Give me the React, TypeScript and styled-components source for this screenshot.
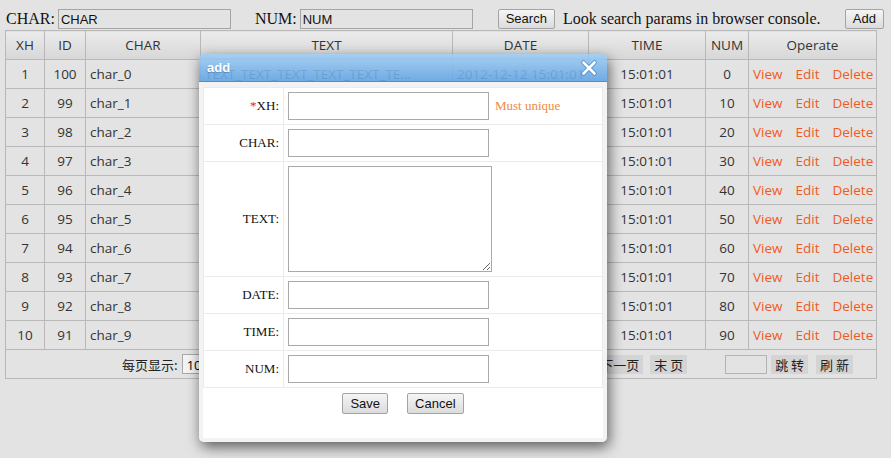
import React from "react";
import styled, { createGlobalStyle } from "styled-components";

const GlobalStyle = createGlobalStyle`
  html, body {
    margin: 0;
    padding: 0;
    background: #e3e3e3;
    font-family: "Liberation Serif", "Times New Roman", serif;
  }
`;

interface Row {
  xh: number;
  id: number;
  char: string;
  text: string;
  date: string;
  time: string;
  num: number;
}

const rows: Row[] = Array.from({ length: 10 }, (_, i) => ({
  xh: i + 1,
  id: 100 - i,
  char: `char_${i}`,
  text: "TEXT_TEXT_TEXT_TEXT_TEXT_TE...",
  date: "2012-12-12 15:01:01",
  time: "15:01:01",
  num: i * 10,
}));

const Page = styled.div`
  position: relative;
  width: 891px;
  height: 458px;
  padding: 0 7px 0 5px;
  box-sizing: border-box;
  overflow: hidden;
`;

// search bar
const SearchBar = styled.div`
  display: flex;
  align-items: center;
  height: 22px;
  padding-top: 8px;
`;

const BarLabel = styled.label<{ $gap?: number }>`
  font-family: "Liberation Serif", "Times New Roman", serif;
  font-size: 16px;
  color: #111;
  margin-left: ${(p) => p.$gap ?? 0}px;
  margin-right: 3px;
`;

const BarInput = styled.input`
  width: 173px;
  height: 20px;
  box-sizing: border-box;
  border: 1px solid #a5a5a5;
  background: transparent;
  padding: 0 2px;
  font-family: "Liberation Sans", Arial, sans-serif;
  font-size: 13px;
  color: #111;
  outline: none;
`;

const Button = styled.button<{ $gap?: number }>`
  height: 20px;
  box-sizing: border-box;
  padding: 0 7px;
  margin-left: ${(p) => p.$gap ?? 0}px;
  border: 1px solid #a3a3a3;
  border-radius: 2px;
  background: linear-gradient(#f5f5f5, #dcdcdc);
  font-family: "Liberation Sans", Arial, sans-serif;
  font-size: 13px;
  color: #111;
  line-height: 18px;
`;

const Hint = styled.span`
  margin-left: 8px;
  font-size: 16px;
  color: #111;
`;

const AddButton = styled(Button)`
  margin-left: auto;
`;

// grid
const Grid = styled.table`
  width: 871px;
  table-layout: fixed;
  border-collapse: collapse;
  font-family: "Open Sans", "Noto Sans", sans-serif;
  font-size: 13.5px;
  color: #333;
`;

const Th = styled.th`
  height: 28px;
  padding: 0;
  border: 1px solid #b8b8b8;
  background: linear-gradient(#ebebeb, #d7d7d7);
  font-weight: normal;
  text-align: center;
`;

const Td = styled.td<{ $align?: string }>`
  height: 28px;
  padding: 0 4px;
  border: 1px solid #b8b8b8;
  text-align: ${(p) => p.$align ?? "center"};
  white-space: nowrap;
  overflow: hidden;
`;

const Ops = styled.div`
  display: flex;
  gap: 13px;
`;

const Link = styled.a`
  color: #f05a24;
  text-decoration: none;
`;

const PagerCell = styled.td`
  height: 28px;
  padding: 0;
  border: 1px solid #b8b8b8;
`;

const Pager = styled.div`
  display: flex;
  align-items: center;
  padding: 0 23px 0 116px;
  font-family: "Noto Sans CJK SC", "Noto Sans", sans-serif;
  font-size: 13px;
  color: #222;
`;

const PagerGroup = styled.div<{ $right?: boolean }>`
  display: flex;
  align-items: center;
  margin-left: ${(p) => (p.$right ? "auto" : "0")};
`;

const PageSize = styled.select`
  height: 20px;
  margin-left: 4px;
  border: 1px solid #a9a9a9;
  background: #f4f4f4;
  font-family: "Open Sans", sans-serif;
  font-size: 13px;
`;

const PagerButton = styled.span<{ $gap?: number }>`
  height: 19px;
  line-height: 19px;
  padding: 0 4px;
  margin-left: ${(p) => p.$gap ?? 0}px;
  background: #d4d4d4;
  white-space: pre;
`;

const JumpInput = styled.input`
  width: 42px;
  height: 19px;
  box-sizing: border-box;
  margin-left: 38px;
  margin-right: 4px;
  border: 1px solid #b3b3b3;
  background: transparent;
`;

// dialog
const Dialog = styled.div`
  position: absolute;
  left: 199px;
  top: 54px;
  width: 408px;
  border-radius: 5px;
  box-shadow: 2px 5px 14px rgba(0, 0, 0, 0.6);
`;

const DialogHeader = styled.div`
  display: flex;
  align-items: center;
  justify-content: space-between;
  height: 27px;
  padding: 0 10px 0 8px;
  border-radius: 5px 5px 0 0;
  border-bottom: 1px solid rgba(66, 136, 210, 0.9);
  background: linear-gradient(
    rgba(160, 205, 243, 0.9),
    rgba(98, 164, 226, 0.9)
  );
`;

const DialogTitle = styled.span`
  font-family: "Liberation Sans", Arial, sans-serif;
  font-weight: bold;
  font-size: 13px;
  color: #fff;
  text-shadow: 0 1px 1px rgba(40, 90, 150, 0.5);
`;

const DialogBody = styled.div`
  padding: 5px 4px 4px;
  background: #f3f3f3;
  border-radius: 0 0 5px 5px;
`;

const Panel = styled.div`
  background: #fff;
  padding-bottom: 24px;
`;

const Form = styled.table`
  width: 100%;
  border-collapse: collapse;
  font-family: "Liberation Serif", "Times New Roman", serif;
  font-size: 13px;
  color: #111;
`;

const FormRow = styled.tr<{ $h?: number }>`
  height: ${(p) => p.$h ?? 37}px;
`;

const FormLabel = styled.td`
  width: 75px;
  padding: 0 4px 0 0;
  border: 1px solid #ebebeb;
  text-align: right;
`;

const FormField = styled.td`
  padding: 0 0 0 4px;
  border: 1px solid #ebebeb;
`;

const Required = styled.span`
  color: #e8202a;
`;

const FieldInput = styled.input`
  width: 201px;
  height: 28px;
  box-sizing: border-box;
  border: 1px solid #a9a9a9;
  vertical-align: middle;
  outline: none;
`;

const FieldArea = styled.textarea`
  display: block;
  width: 204px;
  height: 106px;
  box-sizing: border-box;
  border: 1px solid #a9a9a9;
  outline: none;
`;

const Note = styled.span`
  margin-left: 6px;
  color: #f08a3c;
  vertical-align: middle;
`;

const Actions = styled.div`
  display: flex;
  justify-content: center;
  gap: 19px;
  padding-top: 5px;
`;

const DialogButton = styled(Button)`
  height: 21px;
`;

const CloseIcon = () => (
  <svg width="16" height="16" viewBox="0 0 16 16">
    <path
      d="M2.5 2.5 L13.5 13.5 M13.5 2.5 L2.5 13.5"
      stroke="#3f86cf"
      strokeWidth="4.2"
      strokeLinecap="round"
    />
    <path
      d="M2.5 2.5 L13.5 13.5 M13.5 2.5 L2.5 13.5"
      stroke="#fff"
      strokeWidth="2.8"
      strokeLinecap="round"
    />
  </svg>
);

const formFields = ["CHAR", "TEXT", "DATE", "TIME", "NUM"];

const App: React.FC = () => {
  return (
    <>
      <GlobalStyle />
      <Page>
        <SearchBar>
          <BarLabel $gap={1}>CHAR:</BarLabel>
          <BarInput defaultValue="CHAR" />
          <BarLabel $gap={24}>NUM:</BarLabel>
          <BarInput defaultValue="NUM" />
          <Button $gap={25}>Search</Button>
          <Hint>Look search params in browser console.</Hint>
          <AddButton>Add</AddButton>
        </SearchBar>

        <Grid>
          <colgroup>
            <col style={{ width: 39 }} />
            <col style={{ width: 41 }} />
            <col style={{ width: 115 }} />
            <col style={{ width: 252 }} />
            <col style={{ width: 136 }} />
            <col style={{ width: 117 }} />
            <col style={{ width: 43 }} />
            <col style={{ width: 128 }} />
          </colgroup>
          <thead>
            <tr>
              <Th>XH</Th>
              <Th>ID</Th>
              <Th>CHAR</Th>
              <Th>TEXT</Th>
              <Th>DATE</Th>
              <Th>TIME</Th>
              <Th>NUM</Th>
              <Th>Operate</Th>
            </tr>
          </thead>
          <tbody>
            {rows.map((r) => (
              <tr key={r.xh}>
                <Td>{r.xh}</Td>
                <Td>{r.id}</Td>
                <Td $align="left">{r.char}</Td>
                <Td $align="left">{r.text}</Td>
                <Td $align="left">{r.date}</Td>
                <Td>{r.time}</Td>
                <Td>{r.num}</Td>
                <Td $align="left">
                  <Ops>
                    <Link>View</Link>
                    <Link>Edit</Link>
                    <Link>Delete</Link>
                  </Ops>
                </Td>
              </tr>
            ))}
            <tr>
              <PagerCell colSpan={8}>
                <Pager>
                  <PagerGroup>
                    每页显示:
                    <PageSize defaultValue="10">
                      <option>10</option>
                      <option>20</option>
                    </PageSize>
                  </PagerGroup>
                  <PagerGroup $right>
                    <PagerButton>首 页</PagerButton>
                    <PagerButton $gap={7}>上一页</PagerButton>
                    <PagerButton $gap={7}>下一页</PagerButton>
                    <PagerButton $gap={7}>末 页</PagerButton>
                    <JumpInput />
                    <PagerButton>跳 转</PagerButton>
                    <PagerButton $gap={8}>刷 新</PagerButton>
                  </PagerGroup>
                </Pager>
              </PagerCell>
            </tr>
          </tbody>
        </Grid>

        <Dialog>
          <DialogHeader>
            <DialogTitle>add</DialogTitle>
            <CloseIcon />
          </DialogHeader>
          <DialogBody>
            <Panel>
              <Form>
                <tbody>
                  <FormRow>
                    <FormLabel>
                      <Required>*</Required>XH:
                    </FormLabel>
                    <FormField>
                      <FieldInput />
                      <Note>Must unique</Note>
                    </FormField>
                  </FormRow>
                  {formFields.map((f) => (
                    <FormRow key={f} $h={f === "TEXT" ? 115 : 37}>
                      <FormLabel>{f}:</FormLabel>
                      <FormField>
                        {f === "TEXT" ? <FieldArea /> : <FieldInput />}
                      </FormField>
                    </FormRow>
                  ))}
                </tbody>
              </Form>
              <Actions>
                <DialogButton>Save</DialogButton>
                <DialogButton>Cancel</DialogButton>
              </Actions>
            </Panel>
          </DialogBody>
        </Dialog>
      </Page>
    </>
  );
};

export default App;
